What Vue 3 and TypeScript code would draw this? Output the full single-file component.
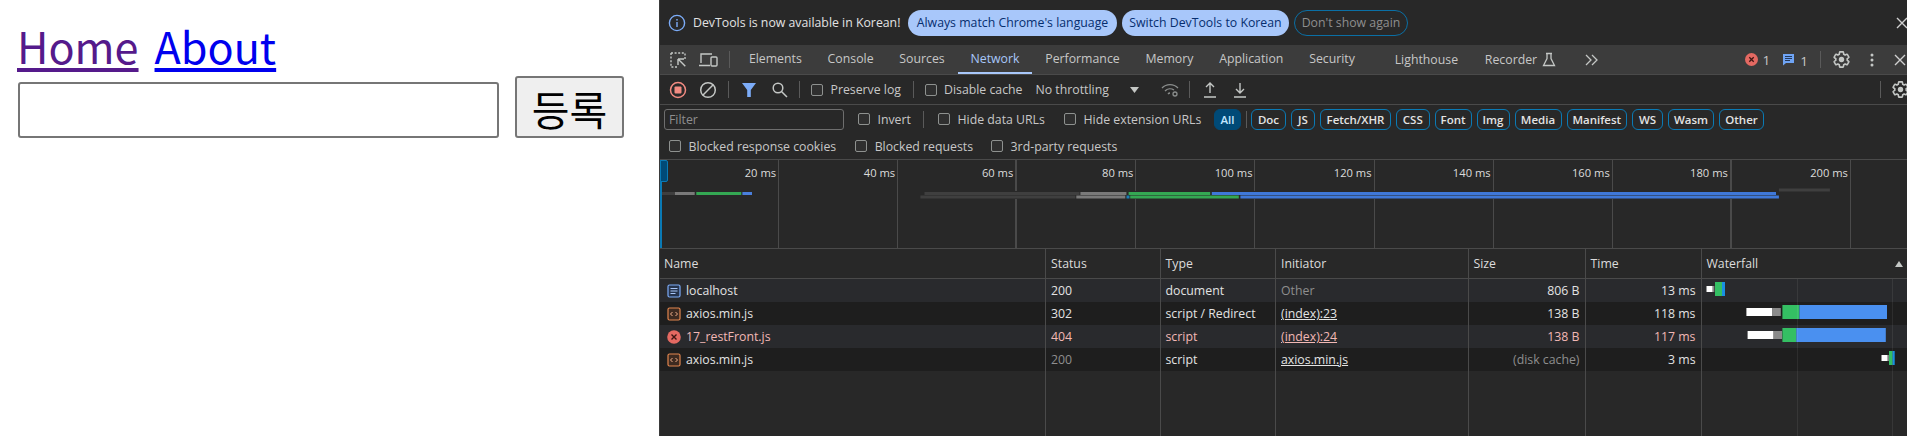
<script setup lang="ts">
interface Seg { x: number; y: number; w: number; h: number; c: string }
const tabs = ['Elements', 'Console', 'Sources', 'Network', 'Performance', 'Memory', 'Application', 'Security']
const pills = ['Doc', 'JS', 'Fetch/XHR', 'CSS', 'Font', 'Img', 'Media', 'Manifest', 'WS', 'Wasm', 'Other']
const ticks = ['20 ms', '40 ms', '60 ms', '80 ms', '100 ms', '120 ms', '140 ms', '160 ms', '180 ms', '200 ms']
const overviewBars: Seg[] = [
  { x: 2, y: 32, w: 12, h: 3, c: '#3f3f3f' },
  { x: 14.7, y: 32, w: 20, h: 3, c: '#7a7a7a' },
  { x: 36.3, y: 32, w: 45, h: 3, c: '#34a853' },
  { x: 82.4, y: 32, w: 9.6, h: 3, c: '#4a7fdc' },
  { x: 260, y: 31, w: 860, h: 8, c: '#282828' },
  { x: 264.5, y: 32, w: 155, h: 3, c: '#3f3f3f' },
  { x: 420.4, y: 32, w: 46, h: 3, c: '#7a7a7a' },
  { x: 468.6, y: 32, w: 81.6, h: 3, c: '#34a853' },
  { x: 551.8, y: 32, w: 564.2, h: 3, c: '#3f78d8' },
  { x: 260.4, y: 35.5, w: 155, h: 3, c: '#3f3f3f' },
  { x: 416.3, y: 35.5, w: 49, h: 3, c: '#7a7a7a' },
  { x: 466.5, y: 35.5, w: 3, h: 3, c: '#1a7fb5' },
  { x: 470.2, y: 35.5, w: 108.6, h: 3, c: '#34a853' },
  { x: 580.4, y: 35.5, w: 538.5, h: 3, c: '#3f78d8' },
  { x: 1118.9, y: 28.5, w: 51, h: 3, c: '#3f3f3f' }
]
const wf: Seg[][] = [
  [
    { x: 4.5, y: 7, w: 6.2, h: 6, c: '#ffffff' },
    { x: 10.7, y: 7, w: 1.6, h: 6, c: '#8a8a8a' },
    { x: 13, y: 3, w: 7, h: 14, c: '#34bf63' },
    { x: 20, y: 3, w: 3, h: 14, c: '#1a8fe3' }
  ],
  [
    { x: 44.4, y: 6, w: 26, h: 8, c: '#ffffff' },
    { x: 70.3, y: 6, w: 8.5, h: 8, c: '#8a8a8a' },
    { x: 80.4, y: 3, w: 17, h: 14, c: '#34bf63' },
    { x: 97.4, y: 3, w: 87.6, h: 14, c: '#4a90f0' }
  ],
  [
    { x: 45.6, y: 6, w: 26, h: 8, c: '#ffffff' },
    { x: 71.5, y: 6, w: 8.5, h: 8, c: '#8a8a8a' },
    { x: 80.4, y: 3, w: 14, h: 14, c: '#34bf63' },
    { x: 94.3, y: 3, w: 89.5, h: 14, c: '#4a90f0' }
  ],
  [
    { x: 179.5, y: 7, w: 6.2, h: 6, c: '#ffffff' },
    { x: 185.7, y: 7, w: 1.2, h: 6, c: '#8a8a8a' },
    { x: 187, y: 3, w: 3.6, h: 14, c: '#34bf63' },
    { x: 190.6, y: 3, w: 2.1, h: 14, c: '#1a8fe3' }
  ]
]
const rows = [
  { name: 'localhost', icon: 'doc', status: '200', type: 'document', init: 'Other', size: '806 B', time: '13 ms' },
  { name: 'axios.min.js', icon: 'script', status: '302', type: 'script / Redirect', init: '(index):23', size: '138 B', time: '118 ms' },
  { name: '17_restFront.js', icon: 'err', status: '404', type: 'script', init: '(index):24', size: '138 B', time: '117 ms' },
  { name: 'axios.min.js', icon: 'script', status: '200', type: 'script', init: 'axios.min.js', size: '(disk cache)', time: '3 ms' }
]
const gear = 'M19.14 12.94c.04-.3.06-.61.06-.94 0-.32-.02-.64-.07-.94l2.03-1.58a.49.49 0 0 0 .12-.61l-1.92-3.32a.488.488 0 0 0-.59-.22l-2.39.96c-.5-.38-1.03-.7-1.62-.94l-.36-2.54a.484.484 0 0 0-.48-.41h-3.84c-.24 0-.43.17-.47.41l-.36 2.54c-.59.24-1.13.57-1.62.94l-2.39-.96c-.22-.08-.47 0-.59.22L2.74 8.87c-.12.21-.08.47.12.61l2.03 1.58c-.05.3-.09.63-.09.94s.02.64.07.94l-2.03 1.58a.49.49 0 0 0-.12.61l1.92 3.32c.12.22.37.29.59.22l2.39-.96c.5.38 1.03.7 1.62.94l.36 2.54c.05.24.24.41.48.41h3.84c.24 0 .44-.17.47-.41l.36-2.54c.59-.24 1.13-.56 1.62-.94l2.39.96c.22.08.47 0 .59-.22l1.92-3.32c.12-.22.07-.47-.12-.61l-2.01-1.58z'
</script>

<template>
  <div class="root">
    <main class="page">
      <nav class="nav"><a class="visited">Home</a><a class="link">About</a></nav>
      <form class="form" @submit.prevent>
        <input class="field" type="text" />
        <button class="submit" type="button">등록</button>
      </form>
    </main>

    <section class="dt">
      <header class="infobar">
        <svg class="info-ico" width="18" height="18" viewBox="0 0 18 18"><circle cx="9" cy="9" r="7.6" fill="none" stroke="#7cacf8" stroke-width="1.4" /><rect x="8.3" y="8" width="1.4" height="5" fill="#7cacf8" /><rect x="8.3" y="5" width="1.4" height="1.6" fill="#7cacf8" /></svg>
        <span class="info-text">DevTools is now available in Korean!</span>
        <button class="ibtn w-always">Always match Chrome's language</button>
        <button class="ibtn w-switch">Switch DevTools to Korean</button>
        <button class="ibtn ghost">Don't show again</button>
        <span class="spring"></span>
        <svg class="ico-x" width="12" height="12" viewBox="0 0 12 12"><path d="M1 1l10 10M11 1L1 11" stroke="#d0d0d0" stroke-width="1.4" /></svg>
      </header>

      <div class="tabbar">
        <svg class="tb-a" width="18" height="18" viewBox="0 0 18 18" fill="none" stroke="#c4c7c5" stroke-width="1.4"><path d="M2 2h14v6M2 2v14h6" stroke-dasharray="2 1.6" /><path d="M9 8h6M9 8v6M9.3 8.3l7 7" /></svg>
        <svg class="tb-b" width="20" height="18" viewBox="0 0 20 18" fill="none" stroke="#c4c7c5" stroke-width="1.4"><path d="M3 12V3h11M1 14.5h11" /><rect x="13" y="6" width="6" height="9" rx="1" /></svg>
        <i class="sep tb-sep"></i>
        <span class="tab-list">
          <span v-for="t in tabs" :key="t" class="tab" :class="{ on: t === 'Network' }">{{ t }}</span>
        </span>
        <span class="tab lh">Lighthouse</span>
        <span class="tab rec">Recorder
          <svg width="14" height="15" viewBox="0 0 14 15" fill="none" stroke="#c4c7c5" stroke-width="1.3"><path d="M4 1.5h6M5 1.5v5L1.5 13.5h11L9 6.500v-5" /></svg>
        </span>
        <svg class="more" width="14" height="12" viewBox="0 0 14 12" fill="none" stroke="#c4c7c5" stroke-width="1.3"><path d="M1 1l5 5-5 5M7 1l5 5-5 5" /></svg>
        <span class="spring"></span>
        <svg width="13" height="13" viewBox="0 0 13 13"><circle cx="6.500" cy="6.500" r="6.500" fill="#e46962" /><path d="M4.300 4.300l4.400 4.400M8.700 4.300l-4.400 4.400" stroke="#3c1512" stroke-width="1.3" /></svg>
        <span class="cnt c1">1</span>
        <svg class="msg" width="13" height="13" viewBox="0 0 13 13"><path d="M1 1h11v9H4l-3 2.500z" fill="#6fa4f5" /><path d="M3 3.500h7M3 5.500h7M3 7.500h5" stroke="#23395c" stroke-width="1" /></svg>
        <span class="cnt c2">1</span>
        <i class="sep sep-r"></i>
        <svg class="gear-a" width="19" height="19" viewBox="0 0 24 24"><path :d="gear" fill="none" stroke="#c4c7c5" stroke-width="2" /><circle cx="12" cy="12" r="3.400" fill="#c4c7c5" /></svg>
        <svg class="dots" width="4" height="14" viewBox="0 0 4 14"><circle cx="2" cy="2" r="1.500" fill="#c4c7c5" /><circle cx="2" cy="7" r="1.500" fill="#c4c7c5" /><circle cx="2" cy="12" r="1.500" fill="#c4c7c5" /></svg>
        <svg class="tb-x" width="12" height="12" viewBox="0 0 12 12"><path d="M1 1l10 10M11 1L1 11" stroke="#d0d0d0" stroke-width="1.4" /></svg>
      </div>

      <div class="bar bar1">
        <svg class="b-rec" width="18" height="18" viewBox="0 0 18 18"><circle cx="9" cy="9" r="7.500" fill="none" stroke="#f28b82" stroke-width="1.500" /><rect x="5.500" y="5.500" width="7" height="7" rx="1" fill="#f28b82" /></svg>
        <svg class="b-clr" width="18" height="18" viewBox="0 0 18 18" fill="none" stroke="#c4c7c5" stroke-width="1.500"><circle cx="9" cy="9" r="7.300" /><path d="M3.800 14.200L14.200 3.800" /></svg>
        <i class="sep b-s1"></i>
        <svg class="b-fil" width="14" height="14" viewBox="0 0 14 14"><path d="M0 0h14L8.800 7v7H5.200V7z" fill="#7cacf8" /></svg>
        <svg class="b-sea" width="16" height="16" viewBox="0 0 16 16" fill="none" stroke="#c4c7c5" stroke-width="1.500"><circle cx="6" cy="6" r="4.800" /><path d="M9.500 9.500L15 15" /></svg>
        <i class="sep b-s2"></i>
        <label class="chk b-pl"><i class="box"></i>Preserve log</label>
        <i class="sep b-s3"></i>
        <label class="chk b-dc"><i class="box"></i>Disable cache</label>
        <span class="plain b-nt">No throttling</span>
        <svg class="b-arr" width="9" height="6" viewBox="0 0 9 6"><path d="M0 0h9L4.500 6z" fill="#c4c7c5" /></svg>
        <svg class="b-wifi" width="18" height="16" viewBox="0 0 18 16" fill="none" stroke="#8a8d8c" stroke-width="1.300"><path d="M1 6a11 11 0 0 1 16 0M4 9a7 7 0 0 1 9-1M7 12a3 3 0 0 1 2-1" /><circle cx="14" cy="12" r="2" /></svg>
        <i class="sep b-s4"></i>
        <svg class="b-up" width="14" height="16" viewBox="0 0 14 16" fill="none" stroke="#c4c7c5" stroke-width="1.400"><path d="M7 11V1M3 5l4-4 4 4M1 15h12" /></svg>
        <svg class="b-dn" width="14" height="16" viewBox="0 0 14 16" fill="none" stroke="#c4c7c5" stroke-width="1.400"><path d="M7 1v10M3 7l4 4 4-4M1 15h12" /></svg>
        <span class="spring"></span>
        <i class="sep"></i>
        <svg class="b-gear" width="19" height="19" viewBox="0 0 24 24"><path :d="gear" fill="none" stroke="#c4c7c5" stroke-width="2" /><circle cx="12" cy="12" r="3.400" fill="#c4c7c5" /></svg>
      </div>

      <div class="bar bar2">
        <input class="filter" placeholder="Filter" />
        <label class="chk f-inv"><i class="box"></i>Invert</label>
        <i class="sep f-s1"></i>
        <label class="chk f-hd"><i class="box"></i>Hide data URLs</label>
        <label class="chk f-he"><i class="box"></i>Hide extension URLs</label>
        <span class="pill all">All</span>
        <i class="sep f-s2"></i>
        <span class="pills"><span v-for="p in pills" :key="p" class="pill">{{ p }}</span></span>
      </div>

      <div class="bar bar3">
        <label class="chk g-1"><i class="box"></i>Blocked response cookies</label>
        <label class="chk g-2"><i class="box"></i>Blocked requests</label>
        <label class="chk g-3"><i class="box"></i>3rd-party requests</label>
      </div>

      <div class="overview">
        <div class="ticks">
          <span v-for="(t, i) in ticks" :key="t" class="tick" :class="{ thick: i === 2 || i === 8 }">{{ t }}</span>
        </div>
        <svg class="ov-bars" width="1247" height="89">
          <rect v-for="(s, i) in overviewBars" :key="i" :x="s.x" :y="s.y" :width="s.w" :height="s.h" :fill="s.c" />
        </svg>
        <i class="handle"></i>
      </div>

      <div class="table">
        <div class="col c-name">
          <div class="th">Name</div>
          <div v-for="(r, i) in rows" :key="i" class="td" :class="[i % 2 ? 'dark' : 'light', { red: r.icon === 'err' }]">
            <svg v-if="r.icon === 'doc'" class="ri" width="14" height="14" viewBox="0 0 14 14" fill="none"><rect x="1" y="1" width="12" height="12" rx="1.500" fill="#26344d" stroke="#7cacf8" stroke-width="1.200" /><path d="M3.500 4.500h7M3.500 7h7M3.500 9.500h5" stroke="#a8c7fa" stroke-width="1" /></svg>
            <svg v-else-if="r.icon === 'script'" class="ri" width="14" height="14" viewBox="0 0 14 14" fill="none"><rect x="1" y="1" width="12" height="12" rx="1.500" fill="#3d2a20" stroke="#e2864f" stroke-width="1.200" /><path d="M5.500 5L3.500 7l2 2M8.500 5l2 2-2 2" stroke="#f2b08a" stroke-width="1" /></svg>
            <svg v-else class="ri" width="14" height="14" viewBox="0 0 14 14"><circle cx="7" cy="7" r="6.800" fill="#e46962" /><path d="M4.500 4.500l5 5M9.500 4.500l-5 5" stroke="#3c1512" stroke-width="1.400" /></svg>
            {{ r.name }}
          </div>
        </div>
        <div class="col c-status">
          <div class="th">Status</div>
          <div v-for="(r, i) in rows" :key="i" class="td" :class="[i % 2 ? 'dark' : 'light', { red: r.icon === 'err', mute: i === 3 }]">{{ r.status }}</div>
        </div>
        <div class="col c-type">
          <div class="th">Type</div>
          <div v-for="(r, i) in rows" :key="i" class="td" :class="[i % 2 ? 'dark' : 'light', { red: r.icon === 'err' }]">{{ r.type }}</div>
        </div>
        <div class="col c-init">
          <div class="th">Initiator</div>
          <div v-for="(r, i) in rows" :key="i" class="td" :class="[i % 2 ? 'dark' : 'light', { red: r.icon === 'err', mute: i === 0 }]">
            <span :class="{ ul: i > 0 }">{{ r.init }}</span>
          </div>
        </div>
        <div class="col c-size">
          <div class="th">Size</div>
          <div v-for="(r, i) in rows" :key="i" class="td num" :class="[i % 2 ? 'dark' : 'light', { red: r.icon === 'err', mute: i === 3 }]">{{ r.size }}</div>
        </div>
        <div class="col c-time">
          <div class="th">Time</div>
          <div v-for="(r, i) in rows" :key="i" class="td num" :class="[i % 2 ? 'dark' : 'light', { red: r.icon === 'err' }]">{{ r.time }}</div>
        </div>
        <div class="col c-wf">
          <div class="th th-wf">Waterfall<svg class="sort" width="8" height="6" viewBox="0 0 8 6"><path d="M4 0l4 6H0z" fill="#c4c7c5" /></svg></div>
          <div v-for="(segs, i) in wf" :key="i" class="td wf" :class="i % 2 ? 'dark' : 'light'">
            <svg width="205" height="23"><rect v-for="(s, j) in segs" :key="j" :x="s.x" :y="s.y" :width="s.w" :height="s.h" :fill="s.c" /></svg>
          </div>
          <i class="grid g-a"></i>
          <i class="grid g-b"></i>
        </div>
      </div>
    </section>
  </div>
</template>

<style scoped>
* { box-sizing: border-box; }
.root { display: flex; width: 1907px; height: 436px; overflow: hidden; background: #fff; }
.page { width: 660px; flex: none; padding: 15px 0 0 17px; border-right: 1px solid #3a3a3a; font-family: "Noto Sans CJK KR", sans-serif; }
.nav { display: flex; gap: 16px; font-size: 43.200px; line-height: 60px; height: 62px; }
.nav a { text-decoration: underline; text-decoration-thickness: 3.500px; text-underline-offset: 4px; }
.visited { color: #551a8b; }
.link { color: #0000ee; }
.form { display: flex; align-items: flex-end; margin-left: 1px; margin-top: -1px; }
.field { width: 481px; height: 56px; border: 2px solid #767676; border-radius: 3px; background: #fff; padding: 0; }
.submit { width: 109px; height: 62px; margin-left: 16px; border: 2px solid #767676; border-radius: 3px; background: #efefef; color: #000; font: 41px "Noto Sans CJK KR", sans-serif; padding: 0; }

.dt { flex: 1; min-width: 0; background: #282828; color: #c7c7c7; font: 12.300px "Open Sans", sans-serif; display: flex; flex-direction: column; }
.spring { flex: 1; }
.sep { display: block; flex: none; width: 1px; height: 17px; background: #5a5a5a; }

.infobar { height: 45px; display: flex; align-items: center; flex: none; }
.info-ico { margin-left: 8px; }
.info-text { margin-left: 7px; width: 208px; color: #e3e3e3; white-space: nowrap; }
.ibtn { height: 26px; border-radius: 13px; border: 0; background: #a8c7fa; color: #062e6f; font: 12.300px "Open Sans", sans-serif; padding: 0; white-space: nowrap; }
.w-always { width: 209px; margin-left: 7px; }
.w-switch { width: 167px; margin-left: 5px; }
.ghost { width: 114px; margin-left: 5px; background: transparent; border: 1px solid #0a6fa5; color: #8e8e8e; }
.ico-x { margin-right: -1px; }

.tabbar { height: 30px; flex: none; background: #3c3c3c; border-bottom: 1px solid #4a4a4a; display: flex; align-items: center; }
.tb-a { margin-left: 9px; }
.tb-b { margin-left: 11px; }
.tb-sep { margin-left: 11px; }
.tab-list { display: flex; margin-left: 6px; height: 100%; }
.tab { height: 100%; padding: 0 12.900px; display: flex; align-items: center; white-space: nowrap; border-bottom: 2px solid transparent; margin-bottom: -1px; }
.tab.on { color: #a8c7fa; border-bottom-color: #a8c7fa; }
.lh { margin-left: 14px; }
.rec { margin-left: 1px; gap: 5px; }
.more { margin-left: 16px; }
.cnt { color: #c7c7c7; margin-left: 5px; font-size: 13.500px; }
.c1 { margin-right: 12px; }
.c2 { margin-top: 3px; }
.sep-r { margin-left: 12px; }
.gear-a { margin-left: 11px; }
.dots { margin-left: 19px; }
.tb-x { margin-left: 20px; margin-right: 1px; }

.bar { display: flex; align-items: center; flex: none; white-space: nowrap; }
.bar1 { height: 30px; border-bottom: 1px solid #4a4a4a; }
.bar2 { height: 28px; padding-left: 4px; }
.bar3 { height: 27px; border-bottom: 1px solid #4a4a4a; padding-left: 9px; }
.chk { display: flex; align-items: center; gap: 7.500px; flex: none; }
.box { display: block; width: 12px; height: 12px; border: 1px solid #8e918f; border-radius: 2px; background: #2f2f2f; }
.b-rec { margin-left: 9px; }
.b-clr { margin-left: 12px; }
.b-s1 { margin-left: 11px; }
.b-fil { margin-left: 13px; }
.b-sea { margin-left: 16px; }
.b-s2 { margin-left: 11px; }
.b-pl { margin-left: 11px; width: 90.500px; }
.b-s3 { margin-left: 11px; }
.b-dc { margin-left: 11px; width: 100px; }
.b-nt { margin-left: 11px; width: 76px; }
.b-arr { margin-left: 18px; }
.b-wifi { margin-left: 22px; }
.b-s4 { margin-left: 10px; }
.b-up { margin-left: 13px; }
.b-dn { margin-left: 16px; }
.b-gear { margin-left: 10px; margin-right: -3px; }

.filter { width: 180px; height: 21px; border: 1px solid #6e6e6e; border-radius: 3px; background: #282828; padding: 0 4px; font: 12.300px "Open Sans", sans-serif; color: #c7c7c7; flex: none; }
.filter::placeholder { color: #8e8e8e; }
.f-inv { margin-left: 14px; width: 53px; }
.f-s1 { margin-left: 12px; }
.f-hd { margin-left: 14px; width: 109px; }
.f-he { margin-left: 17px; width: 138px; }
.pills { display: grid; grid-template-columns: 35px 24px 71px 33.500px 37px 33px 47px 60.500px 31px 46px 45px; gap: 5px; margin-left: 4px; }
.pill { display: flex; align-items: center; justify-content: center; height: 21px; padding: 0; border: 1px solid #0a7ab5; border-radius: 6px; color: #e3e3e3; font-weight: 600; font-size: 11.500px; }
.all { width: 27px; margin-left: 12px; background: #004a77; border-color: #004a77; color: #c2e7ff; }
.f-s2 { margin-left: 5px; }
.g-2 { margin-left: 19px; }
.g-3 { margin-left: 18px; }

.overview { position: relative; height: 89px; flex: none; border-bottom: 1px solid #4a4a4a; }
.ticks { display: flex; height: 100%; }
.tick { width: 119.100px; flex: none; border-right: 1px solid #4a4a4a; text-align: right; padding: 4px 2px 0 0; font-size: 11.200px; line-height: 18px; color: #dcdcdc; }
.tick.thick { border-right-width: 2px; }
.ov-bars { position: absolute; left: 0; top: 0; }
.handle { position: absolute; left: 0; top: 0; width: 2px; height: 88px; background: #0a7ab5; }
.handle::after { content: ""; position: absolute; left: 0; top: 0; width: 6px; height: 20px; background: #004a77; border: 1px solid #0a7ab5; border-radius: 0 2px 2px 0; }

.table { flex: 1; display: grid; grid-template-columns: 386px 114.500px 115.500px 192.500px 117px 116px 1fr; min-height: 0; }
.col { display: flex; flex-direction: column; border-right: 1px solid #4a4a4a; position: relative; min-width: 0; }
.c-wf { border-right: 0; }
.th { height: 30px; flex: none; border-bottom: 1px solid #4a4a4a; display: flex; align-items: center; padding: 0 5px; color: #dcdcdc; }
.c-name .th { padding-left: 4px; }
.th-wf { justify-content: space-between; }
.sort { margin-right: -1px; }
.td { height: 23px; flex: none; display: flex; align-items: center; padding: 0 5px; color: #e3e3e3; white-space: nowrap; }
.light { background: #292a2d; }
.dark { background: #1e1e1e; }
.c-name .td { gap: 5px; padding-left: 7px; }
.ri { flex: none; }
.num { justify-content: flex-end; padding-right: 5px; }
.red { color: #f2b8b5; }
.mute { color: #8e8e8e; }
.ul { text-decoration: underline; }
.wf { padding: 0; }
.grid { position: absolute; top: 30px; bottom: 0; width: 1px; background: rgba(255, 255, 255, 0.07); }
.g-a { left: 95px; }
.g-b { left: 190px; }
</style>

<style>
html, body { margin: 0; background: #fff; overflow: hidden; }
</style>
